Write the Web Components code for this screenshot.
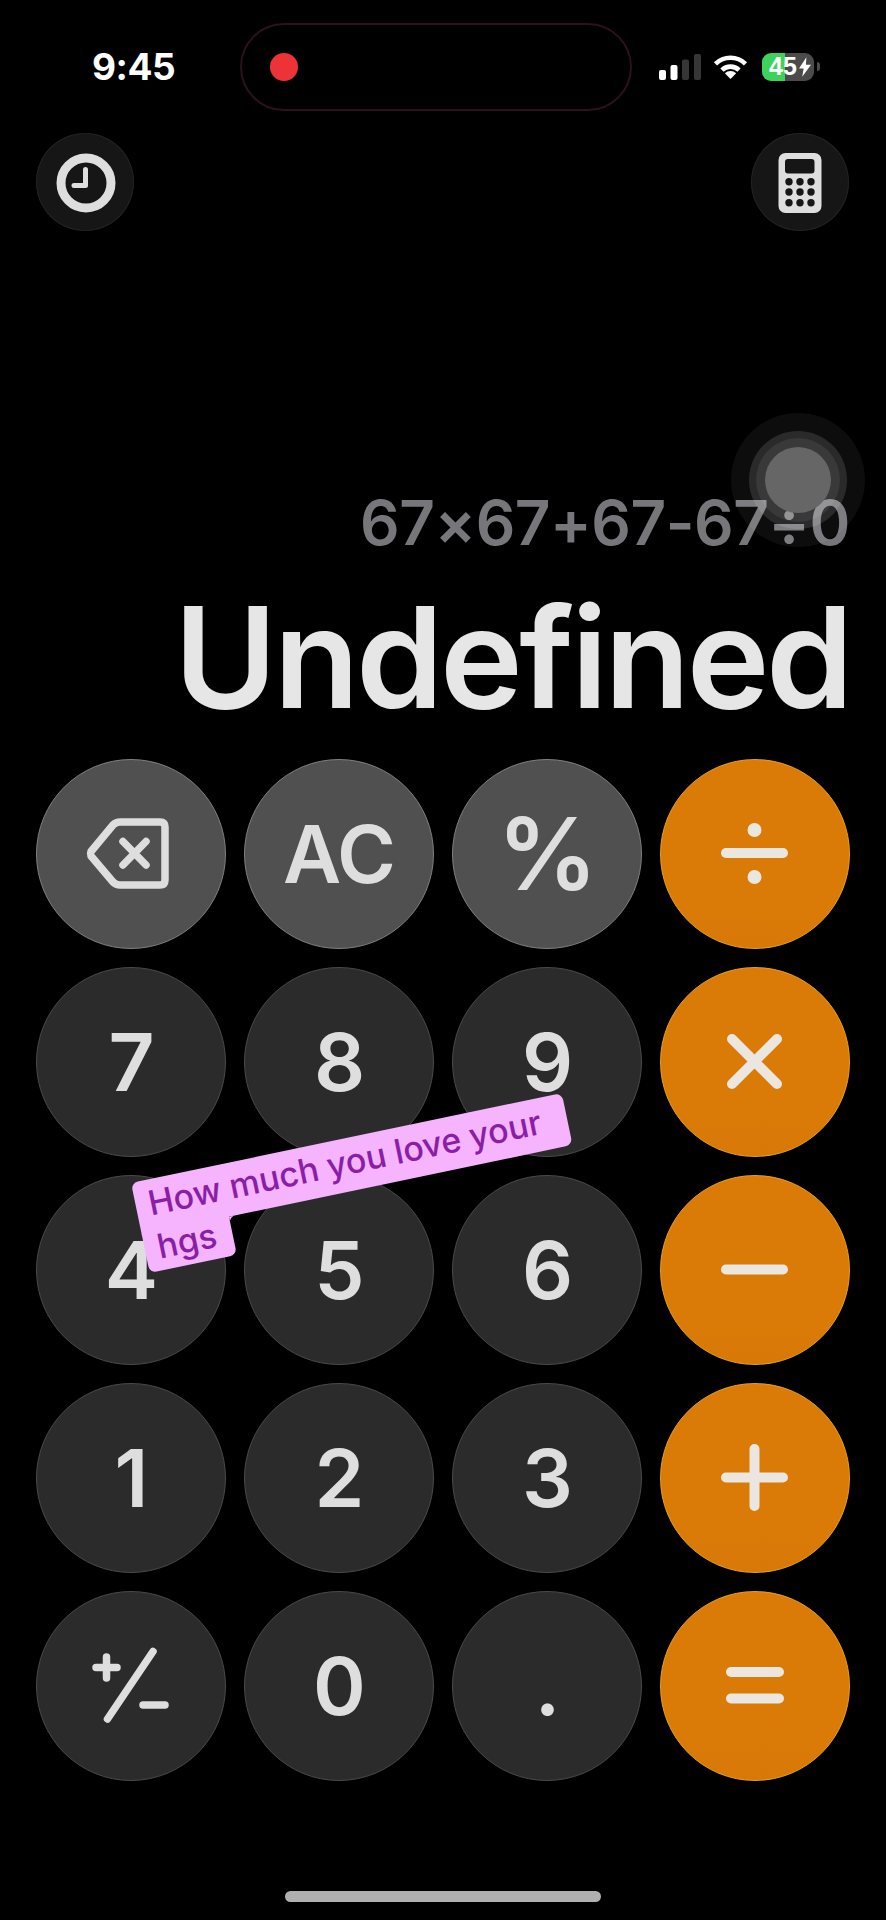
<!DOCTYPE html>
<html lang="en">
<head>
<meta charset="utf-8">
<title>Calculator</title>
<style>
    html, body { margin: 0; background: #000; }
    body { width: 886px; height: 1920px; overflow: hidden; font-family: "Inter", "Liberation Sans", sans-serif; }
</style>
</head>
<body>
<calc-app>
    <status-bar slot="status" time="9:45" level="45"></status-bar>
    <round-action slot="left" icon="clock" label="History"></round-action>
    <round-action slot="right" icon="calculator" label="Calculator"></round-action>
    <calc-display slot="display" expression="67×67+67-67÷0" result="Undefined"></calc-display>
    <calc-keypad slot="keypad">
        <calc-key kind="gray" icon="backspace" label="Delete"></calc-key>
        <calc-key kind="gray">AC</calc-key>
        <calc-key kind="gray" big>%</calc-key>
        <calc-key kind="orange" icon="divide" label="Divide"></calc-key>
        <calc-key>7</calc-key>
        <calc-key>8</calc-key>
        <calc-key>9</calc-key>
        <calc-key kind="orange" icon="times" label="Multiply"></calc-key>
        <calc-key>4</calc-key>
        <calc-key>5</calc-key>
        <calc-key>6</calc-key>
        <calc-key kind="orange" icon="minus" label="Subtract"></calc-key>
        <calc-key>1</calc-key>
        <calc-key>2</calc-key>
        <calc-key>3</calc-key>
        <calc-key kind="orange" icon="plus" label="Add"></calc-key>
        <calc-key icon="plusminus" label="Change sign"></calc-key>
        <calc-key>0</calc-key>
        <calc-key>.</calc-key>
        <calc-key kind="orange" icon="equals" label="Equals"></calc-key>
    </calc-keypad>
    <assistive-touch slot="overlay"></assistive-touch>
    <sticky-note slot="overlay">
        <span slot="first">How much you love your</span>
        <span slot="second">hgs</span>
    </sticky-note>
</calc-app>

<script>
    const icons = {
        backspace: `<path d="M55 92.500 77 66Q80 63 84 63H124Q129 63 129 68V121Q129 126 124 126H84Q80 126 77 123L55 97Q54 94.500 55 92.500Z" fill="none" stroke-width="7.500" stroke-linejoin="round"/>
                    <path d="M87 82.500 110 106M110 82.500 87 106" stroke-width="7.500"/>`,
        divide: `<path d="M66 94H123" stroke-width="10"/><circle cx="94.500" cy="71" r="7" fill="currentColor" stroke="none"/><circle cx="94.500" cy="118" r="7" fill="currentColor" stroke="none"/>`,
        times: `<path d="M72 72 117 117M117 72 72 117" stroke-width="10"/>`,
        minus: `<path d="M66 94.500H123" stroke-width="10"/>`,
        plus: `<path d="M66 94.500H123M94.500 66V123" stroke-width="10"/>`,
        equals: `<path d="M71 81H119M71 107.500H119" stroke-width="10"/>`,
        plusminus: `<path d="M60 76.500H81M70.500 66V87" stroke-width="7.500"/><path d="M117 60.500 71.500 128" stroke-width="7.500"/><path d="M107 114H129" stroke-width="7.500"/>`
    };

    const keytpl = document.createElement('template');
    keytpl.innerHTML = `
        <style>
            :host {
                display: flex;
                align-items: center;
                justify-content: center;
                position: relative;
                box-sizing: border-box;
                width: 190px;
                height: 190px;
                border-radius: 50%;
                background: #2b2b2b;
                border: 1.5px solid #4a4a4a;
                color: #dedede;
                font: 600 80px/1 "Inter", "Liberation Sans", sans-serif;
                letter-spacing: -1px;
            }
            :host([kind="gray"]) {
                background: #505050;
                border-color: #808080;
            }
            :host([kind="orange"]) {
                background: linear-gradient(#da7a07, #da7a07 80%, #d87807);
                border-color: #eaa21c;
                color: #ebe6df;
            }
            :host([big]) { font-size: 100px; }
            svg {
                position: absolute;
                left: -1.5px;
                top: -1.5px;
                width: 190px;
                height: 190px;
                fill: none;
                stroke: currentColor;
                stroke-linecap: round;
            }
            svg:empty { display: none; }
        </style>
        <slot></slot>
        <svg viewBox="0 0 190 190" role="img"></svg>`;

    class calc_key extends HTMLElement {
        constructor() {
            super();
            this.attachShadow({mode: 'open'});
            this.shadowRoot.appendChild(keytpl.content.cloneNode(true));
        }

        connectedCallback() {
            this.update();
        }

        update() {
            const svg = this.shadowRoot.querySelector('svg');
            svg.innerHTML = icons[this.getAttribute('icon')] || '';
            if (this.hasAttribute('label')) svg.setAttribute('aria-label', this.getAttribute('label'));
        }
    }
    customElements.define('calc-key', calc_key);

    const padtpl = document.createElement('template');
    padtpl.innerHTML = `
        <style>
            :host {
                display: grid;
                grid-template-columns: repeat(4, 190px);
                grid-auto-rows: 190px;
                gap: 18px;
                padding: 0 36px 0 36px;
            }
        </style>
        <slot></slot>`;

    class calc_keypad extends HTMLElement {
        constructor() {
            super();
            this.attachShadow({mode: 'open'});
            this.shadowRoot.appendChild(padtpl.content.cloneNode(true));
        }
    }
    customElements.define('calc-keypad', calc_keypad);

    const statustpl = document.createElement('template');
    statustpl.innerHTML = `
        <style>
            :host {
                display: flex;
                align-items: center;
                box-sizing: border-box;
                height: 133px;
                padding: 0 66px 0 92px;
                color: #fff;
            }
            #time {
                width: 148px;
                font: 700 37px/1 "Inter", "Liberation Sans", sans-serif;
                letter-spacing: -.5px;
            }
            #island {
                box-sizing: border-box;
                width: 392px;
                height: 88px;
                border: 2px solid #2c121a;
                border-radius: 44px;
                display: flex;
                align-items: center;
                padding-left: 28px;
            }
            #dot {
                width: 28px;
                height: 28px;
                border-radius: 50%;
                background: #ee3338;
            }
            #right {
                display: flex;
                align-items: center;
                margin-left: 27px;
            }
            #signal { display: block; margin-right: 12px; }
            #wifi { display: block; margin-right: 14px; }
            #battery {
                position: relative;
                display: flex;
                align-items: center;
                box-sizing: border-box;
                width: 52px;
                height: 28px;
                border-radius: 9px;
                padding-left: 7px;
                background: linear-gradient(90deg, #3fd25a 0 45%, #4b4b4b 45%);
                font: 700 25px/1 "Liberation Sans", sans-serif;
            }
            #battery svg { margin-left: 2px; }
            #cap {
                width: 3px;
                height: 9px;
                margin-left: 3px;
                border-radius: 0 3px 3px 0;
                background: #4b4b4b;
            }
        </style>
        <div id="time"></div>
        <div id="island"><div id="dot"></div></div>
        <div id="right">
            <svg id="signal" width="42" height="26" viewBox="0 0 42 26">
                <rect x="0" y="16" width="7" height="10" rx="2" fill="#fff"/>
                <rect x="11.500" y="11" width="7" height="15" rx="2" fill="#fff"/>
                <rect x="23" y="5.500" width="7" height="20.500" rx="2" fill="#363636"/>
                <rect x="35" y="0" width="7" height="26" rx="2" fill="#363636"/>
            </svg>
            <svg id="wifi" width="35" height="25" viewBox="0 0 35 25">
                <path d="M2.500 9.800A21.500 21.500 0 0 1 32.500 9.800M9 16.200A12 12 0 0 1 26 16.200" fill="none" stroke="#fff" stroke-width="4.600"/>
                <path d="M17.500 25 11.800 19.300A8 8 0 0 1 23.200 19.300Z" fill="#fff"/>
            </svg>
            <div id="battery">
                <span id="level"></span>
                <svg width="12" height="20" viewBox="0 0 13 21"><path d="M8 0 0 12H5L3.500 21 13 8H7.500Z" fill="#fff"/></svg>
            </div>
            <div id="cap"></div>
        </div>`;

    class status_bar extends HTMLElement {
        constructor() {
            super();
            this.attachShadow({mode: 'open'});
            this.shadowRoot.appendChild(statustpl.content.cloneNode(true));
        }

        connectedCallback() {
            this.shadowRoot.querySelector('#time').textContent = this.getAttribute('time');
            this.shadowRoot.querySelector('#level').textContent = this.getAttribute('level');
        }
    }
    customElements.define('status-bar', status_bar);

    const actionicons = {
        clock: `<circle cx="50" cy="50" r="25" fill="none" stroke="#dedede" stroke-width="9"/>
                <path d="M49.500 36.500V52.500H38" fill="none" stroke="#dedede" stroke-width="5" stroke-linecap="round" stroke-linejoin="round"/>`,
        calculator: `<rect x="27.500" y="20" width="43" height="60" rx="7" fill="#dedede"/>
                <rect x="34" y="26" width="29.500" height="14.500" rx="3" fill="#161616"/>
                <g fill="#161616">
                    <circle cx="38" cy="48.700" r="3.700"/><circle cx="49" cy="48.700" r="3.700"/><circle cx="60" cy="48.700" r="3.700"/>
                    <circle cx="38" cy="59" r="3.700"/><circle cx="49" cy="59" r="3.700"/><circle cx="60" cy="59" r="3.700"/>
                    <circle cx="38" cy="69.700" r="3.700"/><circle cx="49" cy="69.700" r="3.700"/><circle cx="60" cy="69.700" r="3.700"/>
                </g>`
    };

    const actiontpl = document.createElement('template');
    actiontpl.innerHTML = `
        <style>
            :host {
                display: block;
                width: 98px;
                height: 98px;
                border-radius: 50%;
                background: #161616;
                box-shadow: inset 0 0 0 1px #222;
            }
            svg { display: block; }
        </style>
        <svg width="98" height="98" viewBox="0 0 98 98" role="img"></svg>`;

    class round_action extends HTMLElement {
        constructor() {
            super();
            this.attachShadow({mode: 'open'});
            this.shadowRoot.appendChild(actiontpl.content.cloneNode(true));
        }

        connectedCallback() {
            const svg = this.shadowRoot.querySelector('svg');
            svg.innerHTML = actionicons[this.getAttribute('icon')];
            svg.setAttribute('aria-label', this.getAttribute('label'));
        }
    }
    customElements.define('round-action', round_action);

    const displaytpl = document.createElement('template');
    displaytpl.innerHTML = `
        <style>
            :host {
                display: flex;
                flex-direction: column;
                align-items: flex-end;
                justify-content: flex-end;
                gap: 33px;
                padding: 0 36px 32px 0;
                white-space: nowrap;
            }
            #expression {
                font: 600 62px/62px "Inter", "Liberation Sans", sans-serif;
                letter-spacing: -.5px;
                color: #77777b;
            }
            #result {
                font: 600 140px/140px "Inter", "Liberation Sans", sans-serif;
                letter-spacing: -3.400px;
                color: #e6e6e6;
            }
        </style>
        <div id="expression"></div>
        <div id="result"></div>`;

    class calc_display extends HTMLElement {
        constructor() {
            super();
            this.attachShadow({mode: 'open'});
            this.shadowRoot.appendChild(displaytpl.content.cloneNode(true));
        }

        connectedCallback() {
            this.shadowRoot.querySelector('#expression').textContent = this.getAttribute('expression');
            this.shadowRoot.querySelector('#result').textContent = this.getAttribute('result');
        }
    }
    customElements.define('calc-display', calc_display);

    const touchtpl = document.createElement('template');
    touchtpl.innerHTML = `
        <style>
            :host {
                position: absolute;
                left: 731px;
                top: 413px;
                width: 134px;
                height: 134px;
            }
            div {
                display: flex;
                align-items: center;
                justify-content: center;
                border-radius: 50%;
            }
            #outer { width: 134px; height: 134px; background: rgba(255,255,255,.05); }
            #middle { width: 98px; height: 98px; background: rgba(255,255,255,.12); }
            #inner { width: 84px; height: 84px; background: rgba(255,255,255,.07); }
            #core { width: 66px; height: 66px; background: #666; }
        </style>
        <div id="outer"><div id="middle"><div id="inner"><div id="core"></div></div></div></div>`;

    class assistive_touch extends HTMLElement {
        constructor() {
            super();
            this.attachShadow({mode: 'open'});
            this.shadowRoot.appendChild(touchtpl.content.cloneNode(true));
        }
    }
    customElements.define('assistive-touch', assistive_touch);

    const notetpl = document.createElement('template');
    notetpl.innerHTML = `
        <style>
            :host {
                position: absolute;
                left: 131px;
                top: 1183px;
                display: flex;
                flex-direction: column;
                align-items: flex-start;
                transform-origin: 0 0;
                transform: rotate(-11.8deg);
                color: #8a1ea6;
                font: 500 34px/44px "Inter", "Liberation Sans", sans-serif;
                white-space: nowrap;
            }
            .line {
                position: relative;
                box-sizing: border-box;
                background: #f5b4fd;
            }
            #first {
                width: 440px;
                height: 53px;
                padding: 2px 0 0 13px;
                border-radius: 7px 7px 7px 0;
            }
            #second {
                width: 89px;
                height: 40px;
                margin-top: -1px;
                padding: 1px 0 0 13px;
                line-height: 30px;
                border-radius: 0 0 7px 7px;
            }
            #second::after {
                content: "";
                position: absolute;
                left: 100%;
                top: 1px;
                width: 7px;
                height: 7px;
                background: radial-gradient(circle at 100% 100%, transparent 7px, #f5b4fd 7.500px);
            }
        </style>
        <div class="line" id="first"><slot name="first"></slot></div>
        <div class="line" id="second"><slot name="second"></slot></div>`;

    class sticky_note extends HTMLElement {
        constructor() {
            super();
            this.attachShadow({mode: 'open'});
            this.shadowRoot.appendChild(notetpl.content.cloneNode(true));
        }
    }
    customElements.define('sticky-note', sticky_note);

    const apptpl = document.createElement('template');
    apptpl.innerHTML = `
        <style>
            :host {
                display: flex;
                flex-direction: column;
                position: relative;
                width: 886px;
                height: 1920px;
                background: #000;
            }
            #actions {
                display: flex;
                justify-content: space-between;
                padding: 0 37px 0 36px;
            }
            #display { display: flex; flex-direction: column; justify-content: flex-end; height: 528px; }
            #home {
                align-self: center;
                width: 316px;
                height: 11px;
                margin-top: 110px;
                border-radius: 6px;
                background: #b0b0b0;
            }
        </style>
        <slot name="status"></slot>
        <div id="actions"><slot name="left"></slot><slot name="right"></slot></div>
        <div id="display"><slot name="display"></slot></div>
        <slot name="keypad"></slot>
        <div id="home"></div>
        <slot name="overlay"></slot>`;

    class calc_app extends HTMLElement {
        constructor() {
            super();
            this.attachShadow({mode: 'open'});
            this.shadowRoot.appendChild(apptpl.content.cloneNode(true));
        }
    }
    customElements.define('calc-app', calc_app);
</script>
</body>
</html>
